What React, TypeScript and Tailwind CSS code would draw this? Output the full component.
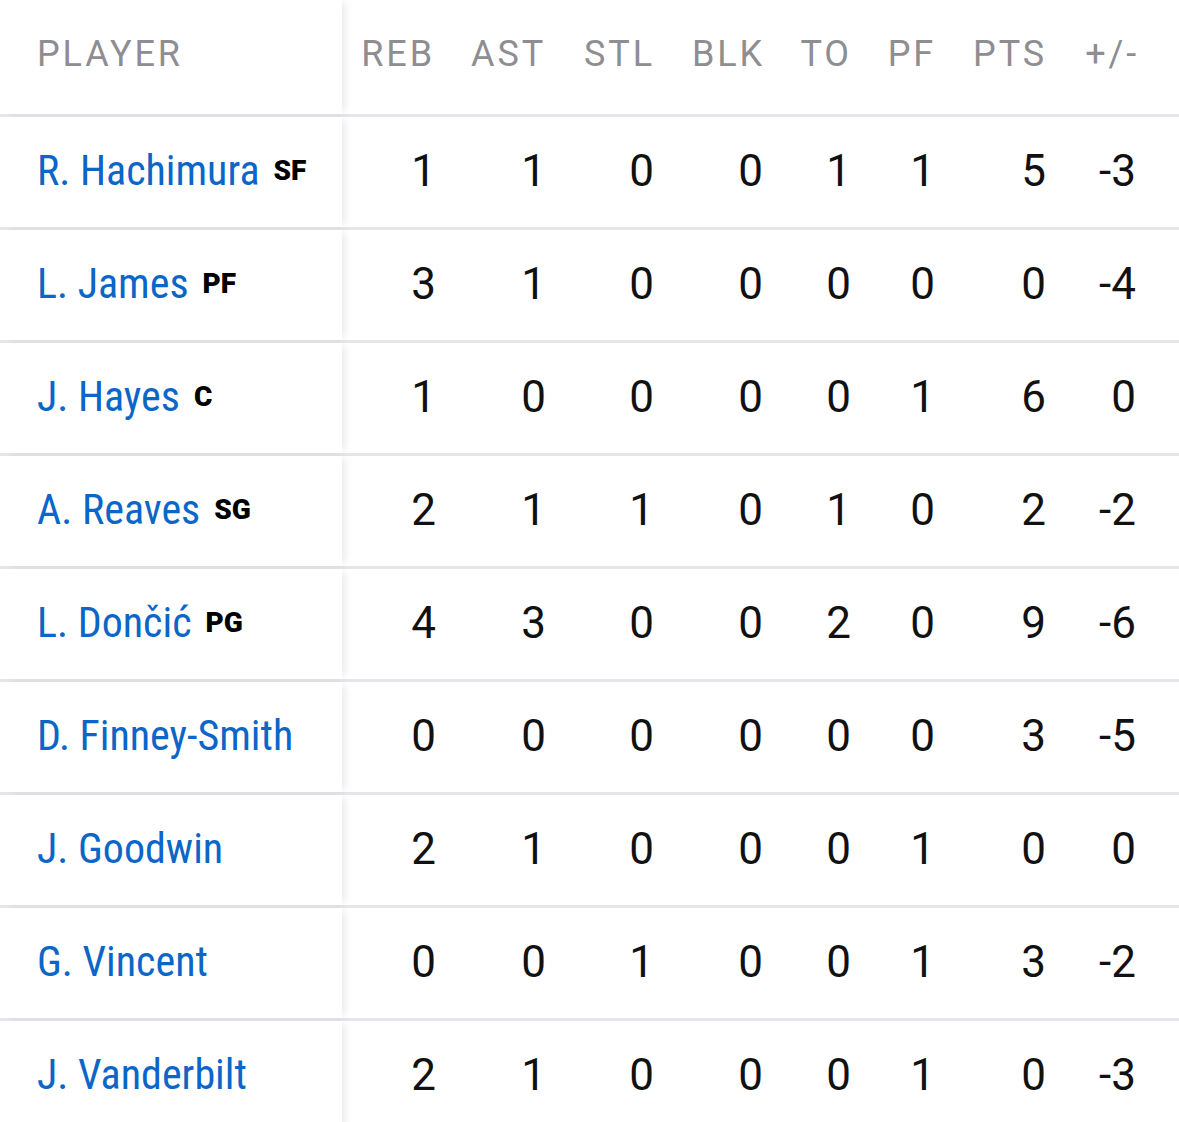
const columns = [
  { key: "reb", label: "REB", w: "w-[90px]", nudge: "-mr-[4px]" },
  { key: "ast", label: "AST", w: "w-[111px]", nudge: "-mr-[3px]" },
  { key: "stl", label: "STL", w: "w-[109px]", nudge: "-mr-[2px]" },
  { key: "blk", label: "BLK", w: "w-[110px]", nudge: "-mr-[1px]" },
  { key: "to", label: "TO", w: "w-[87px]", nudge: "-mr-[2px]" },
  { key: "pf", label: "PF", w: "w-[84px]", nudge: "-mr-[2px]" },
  { key: "pts", label: "PTS", w: "w-[111px]", nudge: "-mr-[2px]" },
  { key: "pm", label: "+/-", w: "w-[92px]", nudge: "mr-0" },
];

const players = [
  { name: "R. Hachimura", pos: "SF", stats: ["1", "1", "0", "0", "1", "1", "5", "-3"] },
  { name: "L. James", pos: "PF", stats: ["3", "1", "0", "0", "0", "0", "0", "-4"] },
  { name: "J. Hayes", pos: "C", stats: ["1", "0", "0", "0", "0", "1", "6", "0"] },
  { name: "A. Reaves", pos: "SG", stats: ["2", "1", "1", "0", "1", "0", "2", "-2"] },
  { name: "L. Dončić", pos: "PG", stats: ["4", "3", "0", "0", "2", "0", "9", "-6"] },
  { name: "D. Finney-Smith", pos: "", stats: ["0", "0", "0", "0", "0", "0", "3", "-5"] },
  { name: "J. Goodwin", pos: "", stats: ["2", "1", "0", "0", "0", "1", "0", "0"] },
  { name: "G. Vincent", pos: "", stats: ["0", "0", "1", "0", "0", "1", "3", "-2"] },
  { name: "J. Vanderbilt", pos: "", stats: ["2", "1", "0", "0", "0", "1", "0", "-3"] },
];

const stickyCell =
  "relative z-10 w-[342px] shrink-0 bg-white shadow-[6px_0_8px_-3px_rgba(0,0,0,0.09)] flex items-center pl-[37px]";

export default function App() {
  return (
    <div className="w-[1179px] h-[1122px] overflow-hidden bg-white font-['Roboto',sans-serif]">
      {/* Header */}
      <div className="flex h-[114px]">
        <div className={`${stickyCell} pb-[7px]`}>
          <span className="text-[36px] tracking-[0.08em] text-[#8e8e92]">PLAYER</span>
        </div>
        <div className="flex pb-[7px]">
          {columns.map((c) => (
            <div key={c.key} className={`${c.w} flex items-center justify-end`}>
              <span className="text-[36px] tracking-[0.08em] -mr-[3px] text-[#8e8e92]">{c.label}</span>
            </div>
          ))}
        </div>
      </div>

      {/* Rows */}
      {players.map((p) => (
        <div key={p.name} className="flex h-[113px] border-t-[3px] border-[#e6e6ea]">
          <div className={`${stickyCell} pb-[3px]`}>
            <span className="text-[42px] text-[#0b66c8] font-stretch-[87.5%] leading-none">{p.name}</span>
            {p.pos && (
              <span className="ml-[14px] text-[28px] font-black text-black leading-none">{p.pos}</span>
            )}
          </div>
          <div className="flex pb-[3px]">
            {p.stats.map((v, i) => (
              <div key={columns[i].key} className={`${columns[i].w} flex items-center justify-end`}>
                <span className={`${columns[i].nudge} text-[44px] text-[#111] leading-none`}>{v}</span>
              </div>
            ))}
          </div>
        </div>
      ))}
    </div>
  );
}
